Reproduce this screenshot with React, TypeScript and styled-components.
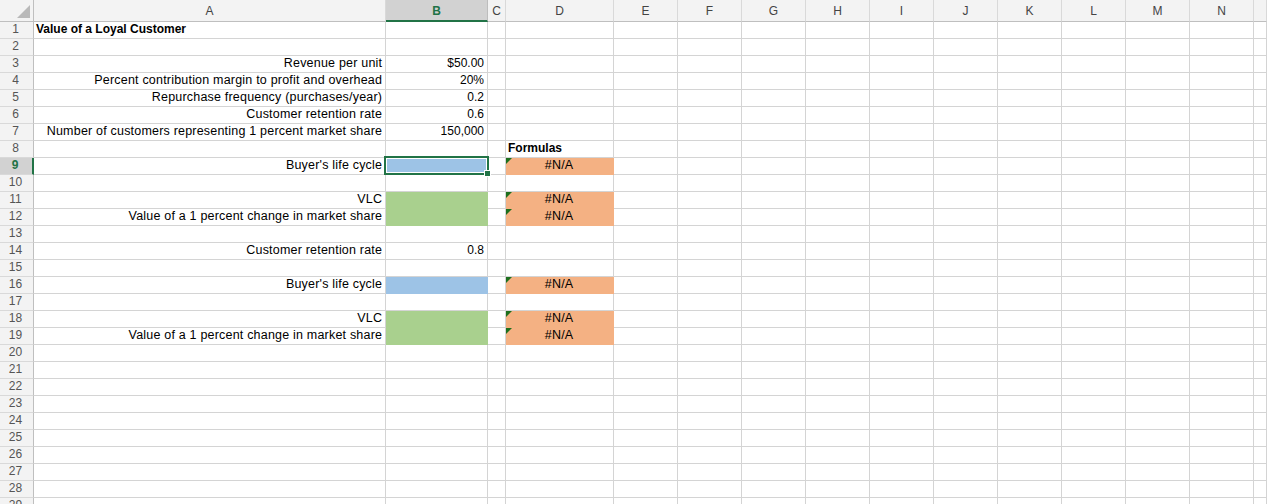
import { FC } from 'react';
import styled, { createGlobalStyle } from 'styled-components';

const GlobalStyle = createGlobalStyle`
    html, body {
        margin: 0;
        padding: 0;
        background: #ffffff;
        overflow: hidden;
    }
    body {
        font-family: 'Liberation Sans', Arial, sans-serif;
    }
`;

type Fill = 'blue' | 'green' | 'orange';
type Align = 'left' | 'right' | 'center';
type Kind = 'label' | 'number' | 'heading';

interface ICell {
    text?: string;
    align?: Align;
    kind?: Kind;
    fill?: Fill;
    flag?: boolean;
    selected?: boolean;
}

const FILLS: Record<Fill, string> = {
    blue: '#9dc3e6',
    green: '#a9d08e',
    orange: '#f4b183',
};

const COLUMNS = ['A', 'B', 'C', 'D', 'E', 'F', 'G', 'H', 'I', 'J', 'K', 'L', 'M', 'N', ''];
const ROW_COUNT = 29;
const SELECTED_COL = 1;
const SELECTED_ROW = 9;

const label = (text: string): ICell => ({ text, align: 'right', kind: 'label' });
const value = (text: string): ICell => ({ text, align: 'right', kind: 'number' });
const na = (): ICell => ({ text: '#N/A', align: 'center', kind: 'label', fill: 'orange', flag: true });

// row number -> column index -> cell
const DATA: Record<number, Record<number, ICell>> = {
    1: { 0: { text: 'Value of a Loyal Customer', align: 'left', kind: 'heading' } },
    3: { 0: label('Revenue per unit'), 1: value('$50.00') },
    4: { 0: label('Percent contribution margin to profit and overhead'), 1: value('20%') },
    5: { 0: label('Repurchase frequency (purchases/year)'), 1: value('0.2') },
    6: { 0: label('Customer retention rate'), 1: value('0.6') },
    7: { 0: label('Number of customers representing 1 percent market share'), 1: value('150,000') },
    8: { 3: { text: 'Formulas', align: 'left', kind: 'heading' } },
    9: { 0: label("Buyer's life cycle"), 1: { fill: 'blue', selected: true }, 3: na() },
    11: { 0: label('VLC'), 1: { fill: 'green' }, 3: na() },
    12: { 0: label('Value of a 1 percent change in market share'), 1: { fill: 'green' }, 3: na() },
    14: { 0: label('Customer retention rate'), 1: value('0.8') },
    16: { 0: label("Buyer's life cycle"), 1: { fill: 'blue' }, 3: na() },
    18: { 0: label('VLC'), 1: { fill: 'green' }, 3: na() },
    19: { 0: label('Value of a 1 percent change in market share'), 1: { fill: 'green' }, 3: na() },
};

const App = () => {
    const rows = Array.from({ length: ROW_COUNT }, (_, i) => i + 1);

    return (
        <>
            <GlobalStyle />
            <Sheet>
                <Corner>
                    <CornerMark />
                </Corner>
                {COLUMNS.map((c, i) => (
                    <ColHeader key={c || 'end'} $selected={i === SELECTED_COL}>
                        {c}
                    </ColHeader>
                ))}
                {rows.map((r) => (
                    <Row key={r} row={r} />
                ))}
            </Sheet>
        </>
    );
};

export default App;

//---------------------------------------------------------------- //

const Row: FC<{ row: number }> = ({ row }) => {
    const cells = DATA[row] || {};
    return (
        <>
            <RowHeader $selected={row === SELECTED_ROW}>{row}</RowHeader>
            {COLUMNS.map((c, i) => {
                const cell = cells[i] || {};
                return (
                    <Cell key={c || 'end'} $align={cell.align || 'left'} $fill={cell.fill}>
                        {cell.flag && <ErrorFlag />}
                        {cell.text && <CellText $kind={cell.kind || 'label'}>{cell.text}</CellText>}
                        {cell.selected && (
                            <Selection>
                                <Handle />
                            </Selection>
                        )}
                    </Cell>
                );
            })}
        </>
    );
};

const Sheet = styled.div`
    display: grid;
    grid-template-columns: 34px 352px 102px 18px 108px repeat(10, 64px) 1fr;
    grid-template-rows: 22px;
    grid-auto-rows: 17px;
    width: 1267px;
    height: 504px;
    overflow: hidden;
    font-size: 12px;
    color: #000;
`;

const Corner = styled.div`
    position: relative;
    box-sizing: border-box;
    background: #f3f3f3;
    border-right: 1px solid #bfbfbf;
    border-bottom: 1px solid #bfbfbf;
`;

const CornerMark = styled.div`
    position: absolute;
    right: 3px;
    bottom: 3px;
    width: 0;
    height: 0;
    border-bottom: 13px solid #b9b9b9;
    border-left: 13px solid transparent;
`;

const ColHeader = styled.div<{ $selected?: boolean }>`
    box-sizing: border-box;
    display: flex;
    align-items: center;
    justify-content: center;
    padding-top: 1px;
    background: ${(p) => (p.$selected ? '#d2d2d2' : '#f3f3f3')};
    color: ${(p) => (p.$selected ? '#217346' : '#444444')};
    font-weight: ${(p) => (p.$selected ? 700 : 400)};
    font-size: 12px;
    border-right: 1px solid ${(p) => (p.$selected ? '#bdbdbd' : '#d9d9d9')};
    border-bottom: ${(p) => (p.$selected ? '2px solid #217346' : '1px solid #bfbfbf')};
`;

const RowHeader = styled.div<{ $selected?: boolean }>`
    box-sizing: border-box;
    display: flex;
    align-items: flex-end;
    justify-content: center;
    padding: 0 2px 1px 0;
    line-height: 15px;
    background: ${(p) => (p.$selected ? '#d2d2d2' : '#f3f3f3')};
    color: ${(p) => (p.$selected ? '#217346' : '#555555')};
    font-weight: ${(p) => (p.$selected ? 700 : 400)};
    font-size: 12px;
    border-right: ${(p) => (p.$selected ? '2px solid #217346' : '1px solid #bfbfbf')};
    border-bottom: 1px solid #d9d9d9;
`;

const Cell = styled.div<{ $align: Align; $fill?: Fill }>`
    position: relative;
    box-sizing: border-box;
    display: flex;
    align-items: flex-end;
    justify-content: ${(p) => (p.$align === 'right' ? 'flex-end' : p.$align === 'center' ? 'center' : 'flex-start')};
    padding: 0 3px 1px 2px;
    white-space: nowrap;
    line-height: 15px;
    background: ${(p) => (p.$fill ? FILLS[p.$fill] : '#ffffff')};
    border-right: 1px solid ${(p) => (p.$fill ? FILLS[p.$fill] : '#d4d4d4')};
    border-bottom: 1px solid ${(p) => (p.$fill ? FILLS[p.$fill] : '#d4d4d4')};
`;

const CellText = styled.span<{ $kind: Kind }>`
    font-size: ${(p) => (p.$kind === 'label' ? '12.5px' : '12px')};
    letter-spacing: ${(p) => (p.$kind === 'label' ? '0.2px' : '0')};
    font-weight: ${(p) => (p.$kind === 'heading' ? 700 : 400)};
    margin-right: ${(p) => (p.$kind === 'label' ? '-0.2px' : '0')};
`;

const ErrorFlag = styled.div`
    position: absolute;
    top: 0;
    left: 0;
    width: 0;
    height: 0;
    border-top: 6px solid #1d6f1d;
    border-right: 6px solid transparent;
`;

const Selection = styled.div`
    position: absolute;
    top: -2px;
    left: -2px;
    right: -2px;
    bottom: -1px;
    border: 2px solid #217346;
    box-shadow: inset 0 0 0 1px #ffffff;
    pointer-events: none;
    z-index: 2;
`;

const Handle = styled.div`
    position: absolute;
    right: -4px;
    bottom: -4px;
    width: 5px;
    height: 5px;
    background: #217346;
    border: 1px solid #ffffff;
`;
